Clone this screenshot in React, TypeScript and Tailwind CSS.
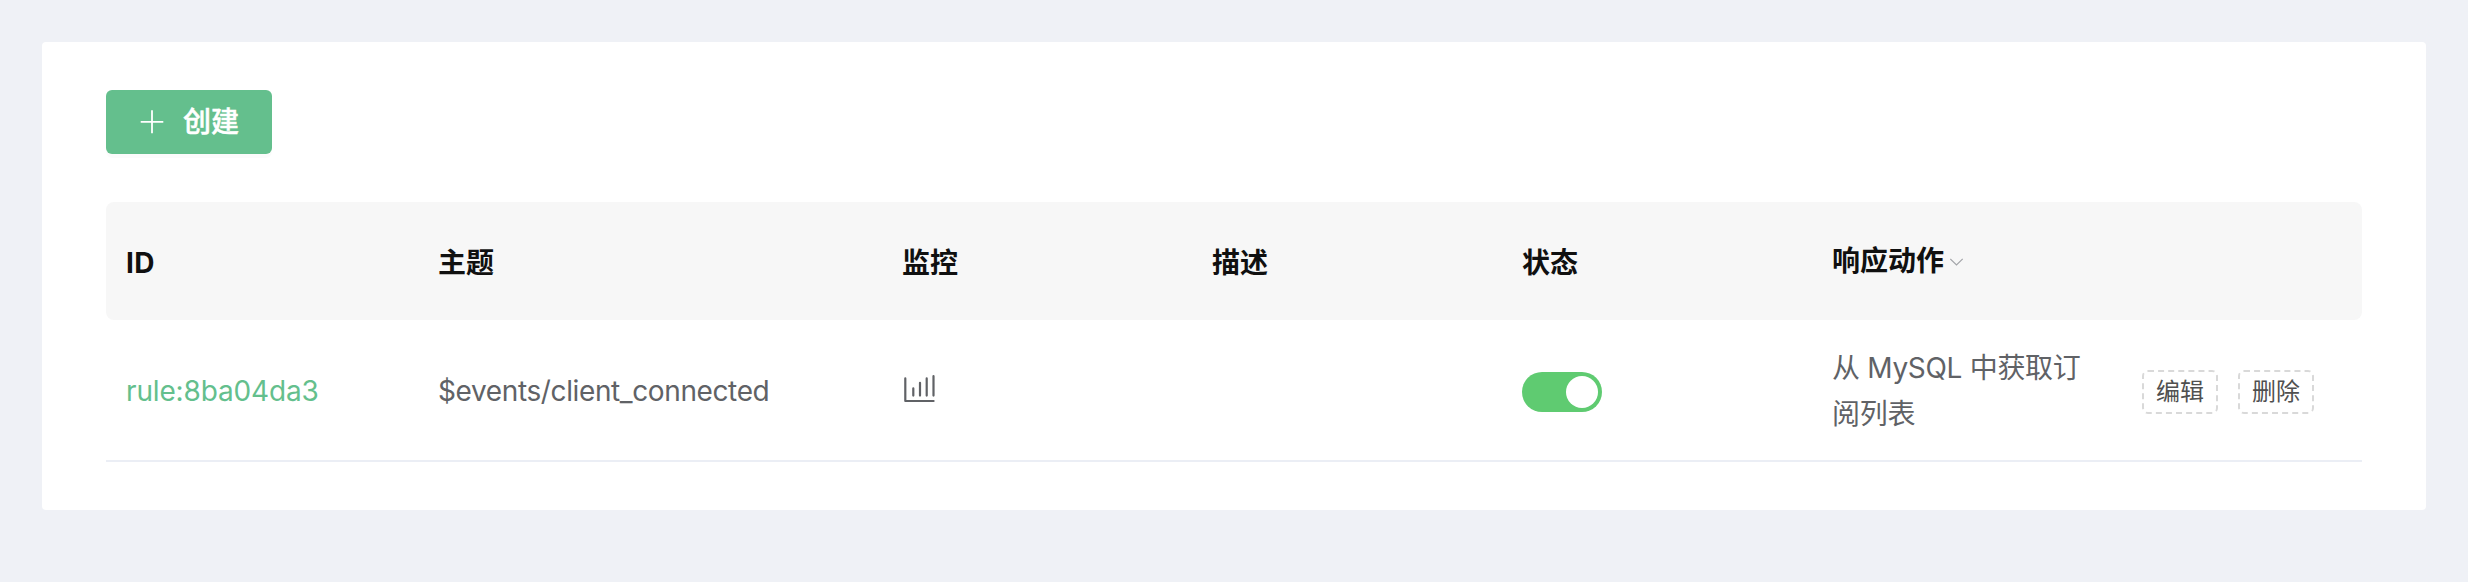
import React from "react";

const columns = "grid grid-cols-[312px_464px_310px_310px_310px_310px_240px]";

function PlusIcon() {
  return (
    <svg width="24" height="24" viewBox="0 0 24 24" fill="none" stroke="#fff" strokeWidth="1.8">
      <path d="M0.7 11.8H23.3M12 0.3V23.2" />
    </svg>
  );
}

function ChartIcon() {
  return (
    <svg
      width="32"
      height="28"
      viewBox="0 0 32 28"
      fill="none"
      stroke="#606266"
      strokeWidth="2.2"
      strokeLinecap="round"
      strokeLinejoin="round"
    >
      <path d="M1.3 3.4V26H29.6" />
      <path d="M9.3 13.4V20.6M16 7.8V20.6M22.7 3.4V20.6M29.5 1.2V20.6" />
    </svg>
  );
}

function ChevronIcon() {
  return (
    <svg width="14" height="8" viewBox="0 0 14 8" fill="none" stroke="#a3a5a9" strokeWidth="1.2">
      <path d="M0.3 0.9L6.5 7L12.7 0.9" />
    </svg>
  );
}

function HeadCell({ children }: { children?: React.ReactNode }) {
  return <div className="flex items-center pl-5 pt-1">{children}</div>;
}

function ActionButton({ label }: { label: string }) {
  return (
    <button className="flex h-11 w-[76px] items-center justify-center rounded-md border-2 border-dashed border-[#d9d9d9] text-2xl leading-none text-[#505050]">
      {label}
    </button>
  );
}

export default function App() {
  return (
    <div className="h-[582px] w-[2468px] bg-[#eff1f6] p-[42px] font-['Inter','Noto_Sans_CJK_SC',sans-serif] text-[28px] leading-[46px] text-[#606266]">
      <div className="h-[468px] rounded bg-white px-16 pt-12">
        <button className="flex h-16 w-[166px] items-center rounded-md bg-[#64bf8d] pl-[34px] font-medium text-white shadow-[0_4px_0_rgba(0,0,0,0.016)]">
          <PlusIcon />
          <span className="ml-[19px] [-webkit-text-stroke:0.5px_#fff]">创建</span>
        </button>

        <div className={`${columns} mt-12 h-[118px] rounded-lg bg-[#f7f7f7] font-semibold text-[#101010]`}>
          <HeadCell><span className="font-bold tracking-[0.5px]">ID</span></HeadCell>
          <HeadCell>主题</HeadCell>
          <HeadCell>监控</HeadCell>
          <HeadCell>描述</HeadCell>
          <HeadCell>状态</HeadCell>
          <HeadCell>
            <span className="-mt-1">响应动作</span>
            <span className="-mt-[3px] ml-1.5"><ChevronIcon /></span>
          </HeadCell>
          <HeadCell />
        </div>

        <div className={`${columns} h-[142px] items-center border-b-2 border-[#ebeef5]`}>
          <div className="pl-5 pt-0.5 tracking-[-0.15px] text-[#64bf8d]">rule:8ba04da3</div>
          <div className="pl-5 pt-0.5 tracking-[-0.38px]">$events/client_connected</div>
          <div className="pb-0.5 pl-[22px]"><ChartIcon /></div>
          <div />
          <div className="pl-5 pt-1">
            <div className="flex h-10 w-20 items-center justify-end rounded-full bg-[#5fcb71] pr-1">
              <div className="size-8 rounded-full bg-white" />
            </div>
          </div>
          <div className="px-5 pt-0.5 tracking-[-0.3px]">从 MySQL 中获取订阅列表</div>
          <div className="flex gap-5 pl-5 pt-1">
            <ActionButton label="编辑" />
            <ActionButton label="删除" />
          </div>
        </div>
      </div>
    </div>
  );
}
